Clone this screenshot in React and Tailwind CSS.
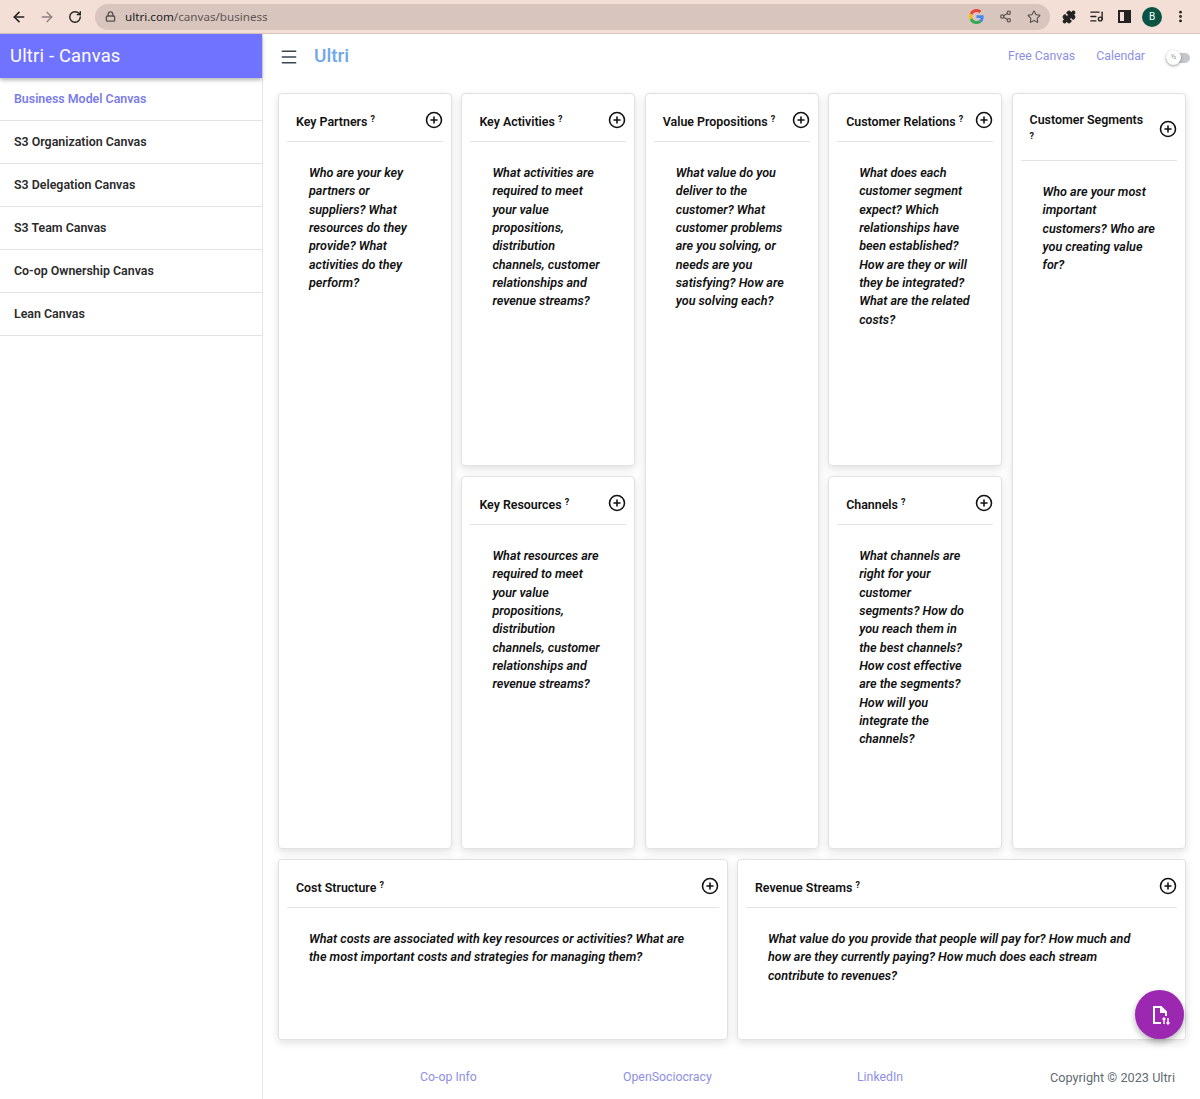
import React from 'react';
import { ArrowLeft, ArrowRight, RotateCw, Lock, Share2, Star, Puzzle, ListMusic, MoreVertical, Menu, CirclePlus } from 'lucide-react';

const navItems = [
  'Business Model Canvas',
  'S3 Organization Canvas',
  'S3 Delegation Canvas',
  'S3 Team Canvas',
  'Co-op Ownership Canvas',
  'Lean Canvas',
];

const GoogleLogo = () => (
  <svg width="15" height="15" viewBox="0 0 48 48">
    <path fill="#EA4335" d="M24 9.5c3.5 0 6.700 1.300 9.100 3.500l6.800-6.800C35.800 2.400 30.300 0 24 0 14.600 0 6.500 5.400 2.600 13.200l7.900 6.200C12.400 13.600 17.700 9.500 24 9.500z" />
    <path fill="#4285F4" d="M47 24.500c0-1.600-.1-3.100-.4-4.500H24v9h13c-.6 3-2.300 5.500-4.800 7.200l7.700 6C44.400 38 47 31.800 47 24.500z" />
    <path fill="#FBBC05" d="M10.500 28.600c-.5-1.400-.8-3-.8-4.600s.3-3.200.8-4.600l-7.900-6.200C.9 16.500 0 20.100 0 24s.9 7.500 2.600 10.800l7.900-6.200z" />
    <path fill="#34A853" d="M24 48c6.500 0 11.900-2.100 15.900-5.800l-7.700-6c-2.100 1.400-4.900 2.300-8.200 2.300-6.300 0-11.600-4.100-13.500-9.900l-7.900 6.200C6.500 42.600 14.600 48 24 48z" />
  </svg>
);

const Card = ({ title, text, wrapTitle, wide }) => (
  <div className="flex flex-col h-full bg-white border border-[#e2e2e2] rounded-[4px] shadow-[0_3px_8px_rgba(0,0,0,0.12)]">
    <div className={`mx-[8px] flex items-center justify-between pl-[9px] pt-[4px] border-b border-[#e4e4e4] shrink-0 ${wrapTitle ? 'h-[67px]' : 'h-[48px]'}`}>
      <div className={`text-[12.4px] leading-[19px] font-semibold text-[#111] ${wrapTitle ? 'w-[115px]' : 'pt-[4px]'}`}>
        {title} <sup className="text-[9px] font-bold">?</sup>
      </div>
      <CirclePlus size={18} strokeWidth={2.1} className="text-[#111] shrink-0" />
    </div>
    <p className={`mt-[22px] pl-[30px] text-[12.6px] leading-[18.35px] font-semibold italic text-[#111] ${wide ? 'pr-[34px]' : 'pr-[28px]'}`}>
      {text}
    </p>
  </div>
);

export default function App() {
  return (
    <div className="w-[1200px] h-[1099px] overflow-hidden flex flex-col bg-white font-['Roboto',sans-serif]">
      {/* Browser toolbar */}
      <div className="h-[34px] shrink-0 flex items-center bg-[#f3dfd6] border-b border-[#d9c4bc] pl-[11px]">
        <ArrowLeft size={16} strokeWidth={2.4} className="text-[#222]" />
        <ArrowRight size={16} strokeWidth={2} className="text-[#8a8280] ml-[12px]" />
        <RotateCw size={14} strokeWidth={2.4} className="text-[#222] ml-[13px]" />
        <div className="ml-[13px] w-[955px] h-[26px] rounded-full bg-[#d8c5be] flex items-center pl-[10px] pr-[9px]">
          <Lock size={11} strokeWidth={3} className="text-[#5a5352]" />
          <span className="ml-[9px] text-[11.65px] font-['Noto_Sans',sans-serif] text-[#5e5755]"><span className="text-[#222]">ultri.com</span>/canvas/business</span>
          <div className="ml-auto flex items-center gap-[15px]">
            <GoogleLogo />
            <Share2 size={13} strokeWidth={2.2} className="text-[#5e5755]" />
            <Star size={14} strokeWidth={2} className="text-[#5e5755]" />
          </div>
        </div>
        <Puzzle size={14} strokeWidth={2} className="text-[#222] fill-[#222] ml-[12px]" />
        <ListMusic size={15} strokeWidth={2.2} className="text-[#222] ml-[13px]" />
        <div className="ml-[14px] w-[13px] h-[13px] border-[2px] border-[#222] flex justify-end"><div className="w-[5px] h-full bg-[#222]" /></div>
        <div className="ml-[11px] w-[20px] h-[20px] rounded-full bg-[#0b5345] text-white text-[10px] flex items-center justify-center">B</div>
        <MoreVertical size={15} strokeWidth={2.6} className="text-[#222] ml-[11px]" />
      </div>

      <div className="flex-1 flex min-h-0">
        {/* Sidebar */}
        <aside className="w-[263px] shrink-0 border-r border-[#e5e5e5]">
          <div className="h-[44px] bg-[#6f73ff] flex items-center pl-[10px] text-white text-[18.4px] tracking-[0.2px] shadow-[0_2px_4px_rgba(0,0,0,0.3)]">
            Ultri - Canvas
          </div>
          <nav>
            {navItems.map((item, i) => (
              <div
                key={item}
                className={`h-[43px] flex items-center pl-[14px] border-b border-[#e3e3e3] text-[12.4px] font-semibold ${i === 0 ? 'text-[#7b7ce8]' : 'text-[#2b2b2b]'}`}
              >
                {item}
              </div>
            ))}
          </nav>
        </aside>

        <main className="flex-1 min-w-0 flex flex-col">
          {/* Top bar */}
          <div className="h-[45px] shrink-0 flex items-center pl-[16px] pr-[10px]">
            <Menu size={20} strokeWidth={1.8} className="text-[#37474f]" />
            <span className="ml-[15px] text-[#6fa8ea] text-[19px] font-medium">Ultri</span>
            <div className="ml-auto flex items-center text-[12.3px] text-[#8d8fe6]">
              <span>Free Canvas</span>
              <span className="ml-[21px]">Calendar</span>
              <div className="ml-[21px] relative w-[24px] h-[10px] rounded-full bg-[#c4c8cc] mt-[2px]">
                <div className="absolute left-0 top-[-3px] w-[15px] h-[15px] rounded-full bg-white shadow-[0_1px_3px_rgba(0,0,0,0.4)] text-[7px] text-[#888] flex items-center justify-center">½</div>
              </div>
            </div>
          </div>

          {/* Canvas grid */}
          <div className="pt-[14px] pl-[15px] pr-[14px]">
            <div className="grid grid-cols-[174px_174px_174px_174px_174px] grid-rows-[373px_373px] gap-x-[9.4px] gap-y-[10px] h-[756px]">
              <div className="row-span-2"><Card title="Key Partners" text="Who are your key partners or suppliers? What resources do they provide? What activities do they perform?" /></div>
              <div><Card title="Key Activities" text="What activities are required to meet your value propositions, distribution channels, customer relationships and revenue streams?" /></div>
              <div className="row-span-2"><Card title="Value Propositions" text="What value do you deliver to the customer? What customer problems are you solving, or needs are you satisfying? How are you solving each?" /></div>
              <div><Card title="Customer Relations" text="What does each customer segment expect? Which relationships have been established? How are they or will they be integrated? What are the related costs?" /></div>
              <div className="row-span-2"><Card wrapTitle title="Customer Segments" text="Who are your most important customers? Who are you creating value for?" /></div>
              <div><Card title="Key Resources" text="What resources are required to meet your value propositions, distribution channels, customer relationships and revenue streams?" /></div>
              <div><Card title="Channels" text="What channels are right for your customer segments? How do you reach them in the best channels? How cost effective are the segments? How will you integrate the channels?" /></div>
            </div>
            <div className="mt-[10px] grid grid-cols-[450px_449px] gap-x-[9px] h-[181px]">
              <Card wide title="Cost Structure" text="What costs are associated with key resources or activities? What are the most important costs and strategies for managing them?" />
              <Card wide title="Revenue Streams" text="What value do you provide that people will pay for? How much and how are they currently paying? How much does each stream contribute to revenues?" />
            </div>
          </div>

          {/* Footer */}
          <footer className="mt-[28px] h-[18px] text-[12.3px] text-[#8d8fe6]">
            <div className="grid grid-cols-[203px_234px_193px_1fr] items-center pl-[157px] pr-[25px]">
              <span className="w-fit">Co-op Info</span>
              <span className="w-fit">OpenSociocracy</span>
              <span className="w-fit">LinkedIn</span>
              <span className="text-[12.7px] text-[#5f6b73] text-right whitespace-nowrap">Copyright © 2023 Ultri</span>
            </div>
          </footer>
        </main>
      </div>

      {/* Floating action button */}
      <button className="fixed left-[1135px] top-[990px] w-[49px] h-[49px] rounded-full bg-[#9c27b0] flex items-center justify-center shadow-[0_3px_6px_rgba(0,0,0,0.3)]">
        <svg width="22" height="24" viewBox="0 0 22 24" fill="none" stroke="white" strokeWidth="2">
          <path d="M12 20H5V4h7l5 5v4" />
          <path d="M12 4v5h5" fill="white" />
          <path d="M15 15v6M13.500 16.500 15 15l1.500 1.500M19 15v6M17.500 19.500 19 21l1.500-1.500" strokeWidth="1.400" />
        </svg>
      </button>
    </div>
  );
}
